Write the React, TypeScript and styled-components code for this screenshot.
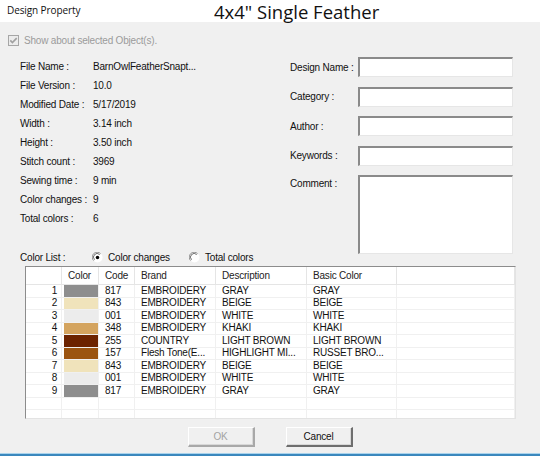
import React from 'react';
import styled, { createGlobalStyle } from 'styled-components';

const GlobalStyle = createGlobalStyle`
  html, body {
    margin: 0;
    padding: 0;
    background: #f0f0f0;
  }
  * {
    box-sizing: border-box;
  }
`;

const classic = `"Liberation Sans", Arial, sans-serif`;

const Window = styled.div`
  width: 540px;
  height: 456px;
  display: flex;
  flex-direction: column;
  background: #f0f0f0;
  font-family: ${classic};
  font-size: 10px;
  letter-spacing: -0.2px;
  color: #111;
  overflow: hidden;
`;

const TitleBar = styled.div`
  height: 22px;
  flex: 0 0 22px;
  display: flex;
  align-items: center;
  background: #fff;
  letter-spacing: 0;
`;

const Caption = styled.div`
  flex: 0 0 214px;
  padding-left: 7px;
  font-family: "Open Sans", "Noto Sans", sans-serif;
  font-size: 10px;
  letter-spacing: -0.1px;
  color: #111;
  margin-top: -2px;
`;

const Title = styled.div`
  font-family: "Open Sans", "Noto Sans", sans-serif;
  font-size: 18.5px;
  color: #111;
  margin-top: 1px;
`;

const Body = styled.div`
  flex: 1;
  display: flex;
  flex-direction: column;
  padding: 12px 0 0;
`;

const CheckRow = styled.label`
  display: flex;
  align-items: center;
  gap: 5px;
  height: 12px;
  padding-left: 8px;
  color: #9b9b9b;
`;

const InfoSection = styled.div`
  display: grid;
  grid-template-columns: 270px 1fr;
  margin-top: 11px;
`;

const LeftColumn = styled.div`
  display: flex;
  flex-direction: column;
  padding-left: 20px;
`;

const InfoList = styled.div`
  display: grid;
  grid-template-columns: 73px 1fr;
  grid-auto-rows: 19px;
  align-items: center;
`;

const ColorListRow = styled.div`
  display: flex;
  align-items: center;
  height: 14px;
  margin-top: 22px;
`;

const ColorListLabel = styled.span`
  width: 72px;
`;

const RadioOption = styled.label<{ $width: number }>`
  display: flex;
  align-items: center;
  gap: 5px;
  width: ${(p) => p.$width}px;
`;

const Form = styled.div`
  display: grid;
  grid-template-columns: 68px 155px;
  grid-auto-rows: 20px;
  row-gap: 9.5px;
  padding-left: 20px;
  align-items: center;
`;

const FieldLabel = styled.span<{ $top?: boolean }>`
  align-self: ${(p) => (p.$top ? 'start' : 'center')};
  padding-top: ${(p) => (p.$top ? '3px' : '0')};
`;

const TextBox = styled.div<{ $rows?: number }>`
  height: ${(p) => (p.$rows ? 79 : 20)}px;
  grid-row: span ${(p) => (p.$rows ? 3 : 1)};
  background: #fff;
  border-top: 2px solid #8a8a8a;
  border-left: 2px solid #8a8a8a;
  border-right: 1px solid #e6e6e6;
  border-bottom: 1px solid #e6e6e6;
  align-self: start;
`;

const Table = styled.div`
  margin: 2px 24px 0 25px;
  height: 153px;
  background: #fff;
  border-top: 1px solid #8c8c8c;
  border-left: 1px solid #8c8c8c;
  border-right: 1px solid #e3e3e3;
  border-bottom: 1px solid #e3e3e3;
  overflow: hidden;
`;

const columns = '36px 37px 36px 81px 91px 90px 1fr';

const HeaderRow = styled.div`
  display: grid;
  grid-template-columns: ${columns};
  height: 18px;
  align-items: stretch;
  border-bottom: 1px solid #e5e5e5;
`;

const HeaderCell = styled.div`
  display: flex;
  align-items: center;
  padding-left: 6px;
  border-right: 1px solid #e5e5e5;
  color: #222;
`;

const Row = styled.div`
  display: grid;
  grid-template-columns: ${columns};
  height: 12.5px;
  border-bottom: 1px solid #f0f0f0;
`;

const Cell = styled.div<{ $right?: boolean }>`
  display: flex;
  align-items: center;
  justify-content: ${(p) => (p.$right ? 'flex-end' : 'flex-start')};
  padding: ${(p) => (p.$right ? '0 4px 0 0' : '0 0 0 6px')};
  border-right: 1px solid #f0f0f0;
  white-space: nowrap;
  overflow: hidden;
  line-height: 1;
  color: #111;
`;

const SwatchCell = styled.div`
  display: flex;
  padding: 0 0 0 2px;
  border-right: 1px solid #f0f0f0;
`;

const Swatch = styled.div<{ $color: string }>`
  flex: 1;
  background: ${(p) => p.$color};
`;

const Buttons = styled.div`
  display: flex;
  justify-content: center;
  gap: 31px;
  margin-top: 8px;
`;

const Button = styled.button<{ $disabled?: boolean }>`
  width: 67px;
  height: 20px;
  padding: 0;
  font-family: ${classic};
  font-size: 10px;
  letter-spacing: -0.2px;
  color: ${(p) => (p.$disabled ? '#a3a3a3' : '#111')};
  background: #f0f0f0;
  border-top: 1px solid #fff;
  border-left: 1px solid #fff;
  border-right: 2px solid ${(p) => (p.$disabled ? '#a8a8a8' : '#6e6e6e')};
  border-bottom: 2px solid ${(p) => (p.$disabled ? '#a8a8a8' : '#6e6e6e')};
  box-shadow: inset -1px -1px 0 #d8d8d8;
`;

const BottomEdge = styled.div`
  margin-top: auto;
  height: 3px;
  border-top: 1px solid #a9d3ec;
  background: #3b88bd;
`;

const CheckBox = () => (
  <svg width="11" height="11" viewBox="0 0 11 11">
    <rect x="0.5" y="0.5" width="10" height="10" fill="#ececec" stroke="#a6a6a6" />
    <path d="M2.3 5.4 L4.4 7.6 L8.7 3.1" fill="none" stroke="#a0a0a0" strokeWidth="1.6" />
  </svg>
);

const Radio = ({ checked }: { checked?: boolean }) => (
  <svg width="11" height="11" viewBox="0 0 12 12">
    <circle cx="6" cy="6" r="5.5" fill="#fff" />
    <path d="M1.8 9.4 A5 5 0 0 1 9.4 1.8" fill="none" stroke="#8a8a8a" strokeWidth="1" />
    <path d="M2.8 8.4 A3.8 3.8 0 0 1 8.4 2.8" fill="none" stroke="#5f5f5f" strokeWidth="1" />
    {checked && <circle cx="6" cy="6" r="1.9" fill="#000" />}
  </svg>
);

const info: [string, string][] = [
  ['File Name :', 'BarnOwlFeatherSnapt...'],
  ['File Version :', '10.0'],
  ['Modified Date :', '5/17/2019'],
  ['Width :', '3.14 inch'],
  ['Height :', '3.50 inch'],
  ['Stitch count :', '3969'],
  ['Sewing time :', '9 min'],
  ['Color changes :', '9'],
  ['Total colors :', '6'],
];

const GRAY = '#8e8e8e';
const BEIGE = '#f0e3bb';
const WHITE = '#ececec';

const colors = [
  { color: GRAY, code: '817', brand: 'EMBROIDERY', desc: 'GRAY', basic: 'GRAY' },
  { color: BEIGE, code: '843', brand: 'EMBROIDERY', desc: 'BEIGE', basic: 'BEIGE' },
  { color: WHITE, code: '001', brand: 'EMBROIDERY', desc: 'WHITE', basic: 'WHITE' },
  { color: '#d4a45f', code: '348', brand: 'EMBROIDERY', desc: 'KHAKI', basic: 'KHAKI' },
  { color: '#6c2300', code: '255', brand: 'COUNTRY', desc: 'LIGHT BROWN', basic: 'LIGHT BROWN' },
  { color: '#9b5411', code: '157', brand: 'Flesh Tone(E...', desc: 'HIGHLIGHT MI...', basic: 'RUSSET BRO...' },
  { color: BEIGE, code: '843', brand: 'EMBROIDERY', desc: 'BEIGE', basic: 'BEIGE' },
  { color: WHITE, code: '001', brand: 'EMBROIDERY', desc: 'WHITE', basic: 'WHITE' },
  { color: GRAY, code: '817', brand: 'EMBROIDERY', desc: 'GRAY', basic: 'GRAY' },
];

const App: React.FC = () => (
  <>
    <GlobalStyle />
    <Window>
      <TitleBar>
        <Caption>Design Property</Caption>
        <Title>4x4" Single Feather</Title>
      </TitleBar>
      <Body>
        <CheckRow>
          <CheckBox />
          Show about selected Object(s).
        </CheckRow>

        <InfoSection>
          <LeftColumn>
            <InfoList>
              {info.map(([label, value]) => (
                <React.Fragment key={label}>
                  <span>{label}</span>
                  <span>{value}</span>
                </React.Fragment>
              ))}
            </InfoList>
            <ColorListRow>
              <ColorListLabel>Color List :</ColorListLabel>
              <RadioOption $width={97}>
                <Radio checked />
                Color changes
              </RadioOption>
              <RadioOption $width={80}>
                <Radio />
                Total colors
              </RadioOption>
            </ColorListRow>
          </LeftColumn>

          <Form>
            <FieldLabel>Design Name :</FieldLabel>
            <TextBox />
            <FieldLabel>Category :</FieldLabel>
            <TextBox />
            <FieldLabel>Author :</FieldLabel>
            <TextBox />
            <FieldLabel>Keywords :</FieldLabel>
            <TextBox />
            <FieldLabel $top>Comment :</FieldLabel>
            <TextBox $rows={3} />
          </Form>
        </InfoSection>

        <Table>
          <HeaderRow>
            <HeaderCell />
            <HeaderCell>Color</HeaderCell>
            <HeaderCell>Code</HeaderCell>
            <HeaderCell>Brand</HeaderCell>
            <HeaderCell>Description</HeaderCell>
            <HeaderCell>Basic Color</HeaderCell>
            <HeaderCell />
          </HeaderRow>
          {colors.map((c, i) => (
            <Row key={i}>
              <Cell $right>{i + 1}</Cell>
              <SwatchCell>
                <Swatch $color={c.color} />
              </SwatchCell>
              <Cell>{c.code}</Cell>
              <Cell>{c.brand}</Cell>
              <Cell>{c.desc}</Cell>
              <Cell>{c.basic}</Cell>
              <Cell />
            </Row>
          ))}
          {[0, 1].map((i) => (
            <Row key={`empty-${i}`}>
              <Cell />
              <Cell />
              <Cell />
              <Cell />
              <Cell />
              <Cell />
              <Cell />
            </Row>
          ))}
        </Table>

        <Buttons>
          <Button $disabled>OK</Button>
          <Button>Cancel</Button>
        </Buttons>

        <BottomEdge />
      </Body>
    </Window>
  </>
);

export default App;
